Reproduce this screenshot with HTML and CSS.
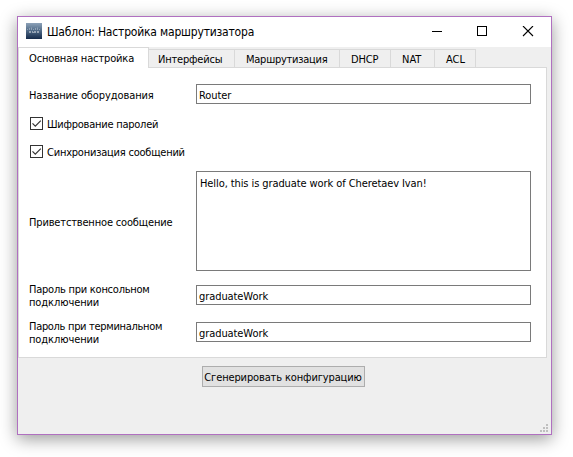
FILE: index.html
```
<!DOCTYPE html>
<html lang="ru">
<head>
<meta charset="utf-8">
<title>Шаблон: Настройка маршрутизатора</title>
<link rel="stylesheet" href="styles.css">
</head>
<body>
<main class="window">
  <header class="titlebar">
    <svg class="app-icon" width="16" height="16" viewBox="0 0 16 16">
      <defs><linearGradient id="g" x1="0" y1="0" x2="0" y2="1"><stop offset="0" stop-color="#8da2b8"/><stop offset=".5" stop-color="#4d6784"/><stop offset="1" stop-color="#152b4b"/></linearGradient></defs>
      <rect width="16" height="16" fill="url(#g)"/>
      <path d="M1.500 6v1M3.500 5v2M5.500 4.500v2.500M7.500 6v1M9.500 5v2M11.500 4.500v2.500M13.500 6v1" stroke="#b9c5d1" opacity=".55"/>
      <path d="M3 8.500h2M6 8.500h1M8 8.500h2M11 8.500h2M3 9.500h2M6 9.500h4M11 9.500h2" stroke="#c3ccd6" opacity=".65"/>
    </svg>
    <h1 class="title">Шаблон: Настройка маршрутизатора</h1>
    <svg class="controls" width="102" height="12" viewBox="0 0 102 12" fill="none" stroke="#000" shape-rendering="crispEdges">
      <path d="M0 5.500h10"/>
      <rect x="45.500" y=".5" width="9" height="9"/>
      <path d="M91 0l10 10M101 0l-10 10" shape-rendering="auto" stroke-width="1.100"/>
    </svg>
  </header>
  <nav class="tabs">
    <span class="tab active">Основная настройка</span>
    <span class="tab t-if">Интерфейсы</span>
    <span class="tab t-route">Маршрутизация</span>
    <span class="tab t-dhcp">DHCP</span>
    <span class="tab t-nat">NAT</span>
    <span class="tab t-acl">ACL</span>
  </nav>
  <section class="pane">
    <div class="row name"><span class="label l-name">Название оборудования</span><div class="field f-router">Router</div></div>
    <div class="check"><svg width="13" height="13" viewBox="0 0 13 13"><rect x=".5" y=".5" width="12" height="12" fill="#fff" stroke="#333"/><path d="M2.500 6.300l2.800 2.800 5.500-5.500" fill="none" stroke="#333" stroke-width="1.200"/></svg><span class="c-enc">Шифрование паролей</span></div>
    <div class="check"><svg width="13" height="13" viewBox="0 0 13 13"><rect x=".5" y=".5" width="12" height="12" fill="#fff" stroke="#333"/><path d="M2.500 6.300l2.800 2.800 5.500-5.500" fill="none" stroke="#333" stroke-width="1.200"/></svg><span class="c-sync">Синхронизация сообщений</span></div>
    <div class="row message"><span class="label l-msg">Приветственное сообщение</span><div class="field area">Hello, this is graduate work of Cheretaev Ivan!</div></div>
    <div class="row pass"><span class="label"><span class="l-con">Пароль при консольном</span><br><span class="l-sub">подключении</span></span><div class="field f-pass">graduateWork</div></div>
    <div class="row pass"><span class="label"><span class="l-term">Пароль при терминальном</span><br><span class="l-sub">подключении</span></span><div class="field f-pass">graduateWork</div></div>
  </section>
  <footer class="footer">
    <button class="generate">Сгенерировать конфигурацию</button>
    <svg class="grip" width="8" height="8" viewBox="0 0 8 8" fill="#bfbfbf" shape-rendering="crispEdges"><path d="M6 0h2v2h-2zM3 3h2v2h-2zM6 3h2v2h-2zM0 6h2v2h-2zM3 6h2v2h-2zM6 6h2v2h-2z"/></svg>
  </footer>
</main>
</body>
</html>
```
FILE: styles.css
```
* { box-sizing: border-box; }
body {
  margin: 0;
  padding: 16px 0 0 17px;
  height: 457px;
  overflow: hidden;
  background: #fff;
  color: #000;
  font: 11px/13px "DejaVu Sans Condensed", "DejaVu Sans", sans-serif;
  font-stretch: condensed;
  white-space: nowrap;
}
.window {
  display: flex;
  flex-direction: column;
  width: 535px;
  height: 419px;
  border: 1px solid #b070c0;
  background: #efefef;
  box-shadow: 0 4px 16px rgba(0, 0, 0, .4);
}
.titlebar { display: flex; align-items: center; height: 30px; padding: 0 17px 0 8px; background: #fff; }
.app-icon { margin-top: -2px; }
.title { margin: -1px auto 0 5px; font-size: 12px; line-height: 16px; font-weight: 400; letter-spacing: -.19px; }
.controls { margin-top: 0; }
.tabs { display: flex; align-items: flex-end; width: 529px; height: 21px; box-shadow: inset 0 -1px #d9d9d9; }
.tab {
  height: 19px;
  padding: 3px 0 0 9px;
  border: 1px solid #d9d9d9;
  border-left: 0;
  background: #efefef;
}
.tab.active {
  width: 131px;
  height: 21px;
  padding: 4px 0 0 10px;
  border-left: 1px solid #d9d9d9;
  border-bottom: 0;
  background: #fff;
  letter-spacing: -.15px;
}
.t-if { width: 86px; letter-spacing: -.2px; }
.t-route { width: 105px; padding-left: 11px; letter-spacing: -.25px; }
.t-dhcp { width: 51px; padding-left: 11px; letter-spacing: -.2px; }
.t-nat { width: 44px; padding-left: 11px; }
.t-acl { width: 41px; padding-left: 11px; }
.pane {
  width: 529px;
  height: 290px;
  padding: 16px 15px 0 10px;
  border: 1px solid #d9d9d9;
  border-top: 0;
  background: #fff;
}
.row { display: grid; grid-template-columns: 167px 335px; align-items: center; }
.row.name { height: 20px; margin-bottom: 13px; }
.label { padding-top: 2px; }
.field { height: 20px; padding: 4px 0 0 2px; border: 1px solid #7a7a7a; background: #fff; letter-spacing: -.08px; }
.field.area { height: 100px; padding: 5px 0 0 3px; letter-spacing: -.09px; }
.check { display: flex; align-items: center; gap: 4px; height: 13px; margin: 0 0 15px 1px; }
.check span { padding-top: 2px; }
.l-name { letter-spacing: -.1px; }
.c-enc { letter-spacing: -.24px; }
.c-sync { letter-spacing: -.22px; }
.l-msg { padding-top: 3px; letter-spacing: -.16px; }
.l-con { letter-spacing: -.24px; }
.l-term { letter-spacing: -.31px; }
.l-sub { letter-spacing: -.1px; }
.row.message { margin: -2px 0 5px; }
.row.pass { height: 37px; }
.footer { position: relative; display: flex; justify-content: center; padding: 8px 3px 0 0; flex: 1; }
.generate {
  width: 163px;
  height: 21px;
  padding: 1px 0 0;
  border: 1px solid #adadad;
  background: #e1e1e1;
  color: #000;
  font: inherit;
  letter-spacing: -.13px;
}
.grip { position: absolute; right: 3px; bottom: 2px; }
```
